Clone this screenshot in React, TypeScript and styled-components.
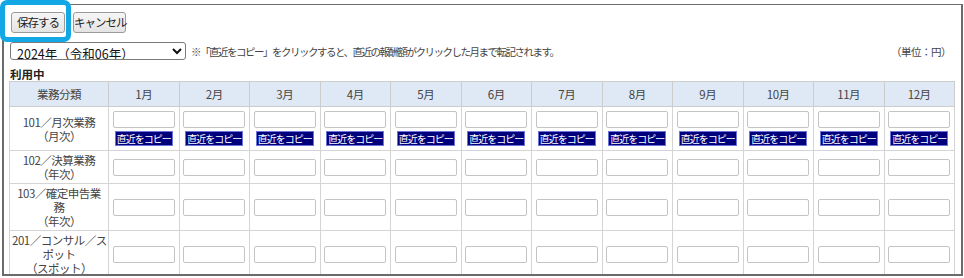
import React from 'react';
import styled, { createGlobalStyle } from 'styled-components';

const FONT = '"Noto Sans CJK JP", "Noto Sans", sans-serif';

const GlobalStyle = createGlobalStyle`
  html, body {
    margin: 0;
    padding: 0;
    background: #ffffff;
  }
  body {
    font-family: ${FONT};
    color: #333333;
  }
`;

const Page = styled.div`
  position: relative;
  width: 964px;
  height: 278px;
  overflow: hidden;
`;

const Frame = styled.div`
  margin: 4px 1px 0 2px;
  height: 272px;
  border: 2px solid #6b6b6b;
  border-top-width: 1px;
  overflow: hidden;
  padding: 7px 6px 0 6px;
  box-sizing: border-box;
  background: #ffffff;
`;

const Highlight = styled.div`
  position: absolute;
  left: 0;
  top: 0;
  width: 71px;
  height: 42px;
  border: 5px solid #12a8e6;
  border-radius: 7px;
  box-sizing: border-box;
  pointer-events: none;
`;

const Toolbar = styled.div`
  display: flex;
  gap: 8px;
  height: 20px;
  margin-left: 1px;
`;

const Button = styled.button<{ $width: number }>`
  width: ${p => p.$width}px;
  height: 21px;
  padding: 0;
  font-family: ${FONT};
  font-size: 11.5px;
  letter-spacing: -1px;
  color: #222;
  background: linear-gradient(#f6f6f6, #e4e4e4);
  border: 1px solid #9a9a9a;
  border-radius: 3px;
  line-height: 19px;
  white-space: nowrap;
`;

const FilterRow = styled.div`
  display: flex;
  align-items: center;
  margin-top: 10px;
  height: 18px;
`;

const YearSelect = styled.select`
  width: 176px;
  height: 18px;
  font-family: ${FONT};
  font-size: 12.5px;
  color: #111;
  border: 1px solid #7a7a7a;
  border-radius: 3px;
  padding: 0 2px;
  background: #fff;
`;

const Note = styled.span`
  margin-left: 5px;
  font-size: 10.5px;
  letter-spacing: -1.5px;
  color: #444;
  flex: 1;
`;

const Unit = styled.span`
  font-size: 10.5px;
  letter-spacing: -0.5px;
  color: #444;
  margin-right: 4px;
`;

const SectionTitle = styled.div`
  margin-top: 7px;
  font-size: 11.5px;
  font-weight: bold;
  color: #222;
  line-height: 14px;
`;

const Table = styled.table`
  width: 946px;
  margin-left: -1px;
  border-collapse: collapse;
  table-layout: fixed;
  font-size: 11.5px;
  letter-spacing: -0.5px;
  color: #444;
`;

const HeadCell = styled.th`
  height: 24px;
  padding: 0;
  background: #dfe9f5;
  border: 1px solid #cccccc;
  font-weight: normal;
  text-align: center;
`;

const LabelCell = styled.td`
  padding: 2px 2px;
  border: 1px solid #d4d4d4;
  text-align: center;
  line-height: 14px;
  white-space: nowrap;
`;

const DataCell = styled.td`
  padding: 4px 0;
  border: 1px solid #d4d4d4;
  text-align: center;
  vertical-align: middle;
`;

const CellStack = styled.div`
  display: flex;
  flex-direction: column;
  align-items: center;
  gap: 3px;
`;

const AmountInput = styled.input`
  width: 62px;
  height: 17px;
  box-sizing: border-box;
  border: 1px solid #c4c4c4;
  border-radius: 2px;
  padding: 0 3px;
  font-family: ${FONT};
  font-size: 11px;
`;

const CopyButton = styled.button`
  width: 58px;
  height: 15px;
  padding: 0;
  background: #00007d;
  border: 1px solid #6c74d8;
  color: #ffffff;
  font-family: ${FONT};
  font-size: 10px;
  letter-spacing: -1px;
  line-height: 12px;
`;

const months = Array.from({ length: 12 }, (_, i) => `${i + 1}月`);

const rows: { lines: string[]; copy?: boolean }[] = [
  { lines: ['101／月次業務', '（月次）'], copy: true },
  { lines: ['102／決算業務', '（年次）'] },
  { lines: ['103／確定申告業', '務', '（年次）'] },
  { lines: ['201／コンサル／ス', 'ポット', '（スポット）'] },
];

const App: React.FC = () => {
  return (
    <Page>
      <GlobalStyle />
      <Frame>
        <Toolbar>
          <Button type="button" $width={54}>保存する</Button>
          <Button type="button" $width={53}>キャンセル</Button>
        </Toolbar>
        <FilterRow>
          <YearSelect defaultValue="2024">
            <option value="2024">2024年（令和06年）</option>
          </YearSelect>
          <Note>※「直近をコピー」をクリックすると、直近の報酬額がクリックした月まで転記されます。</Note>
          <Unit>（単位：円）</Unit>
        </FilterRow>
        <SectionTitle>利用中</SectionTitle>
        <Table>
          <colgroup>
            <col style={{ width: 99 }} />
            {months.map(m => (
              <col key={m} />
            ))}
          </colgroup>
          <thead>
            <tr>
              <HeadCell>業務分類</HeadCell>
              {months.map(m => (
                <HeadCell key={m}>{m}</HeadCell>
              ))}
            </tr>
          </thead>
          <tbody>
            {rows.map(row => (
              <tr key={row.lines[0]}>
                <LabelCell>
                  {row.lines.map((line, i) => (
                    <React.Fragment key={line}>
                      {i > 0 && <br />}
                      {line}
                    </React.Fragment>
                  ))}
                </LabelCell>
                {months.map(m => (
                  <DataCell key={m}>
                    <CellStack>
                      <AmountInput type="text" />
                      {row.copy && <CopyButton type="button">直近をコピー</CopyButton>}
                    </CellStack>
                  </DataCell>
                ))}
              </tr>
            ))}
          </tbody>
        </Table>
      </Frame>
      <Highlight />
    </Page>
  );
};

export default App;
